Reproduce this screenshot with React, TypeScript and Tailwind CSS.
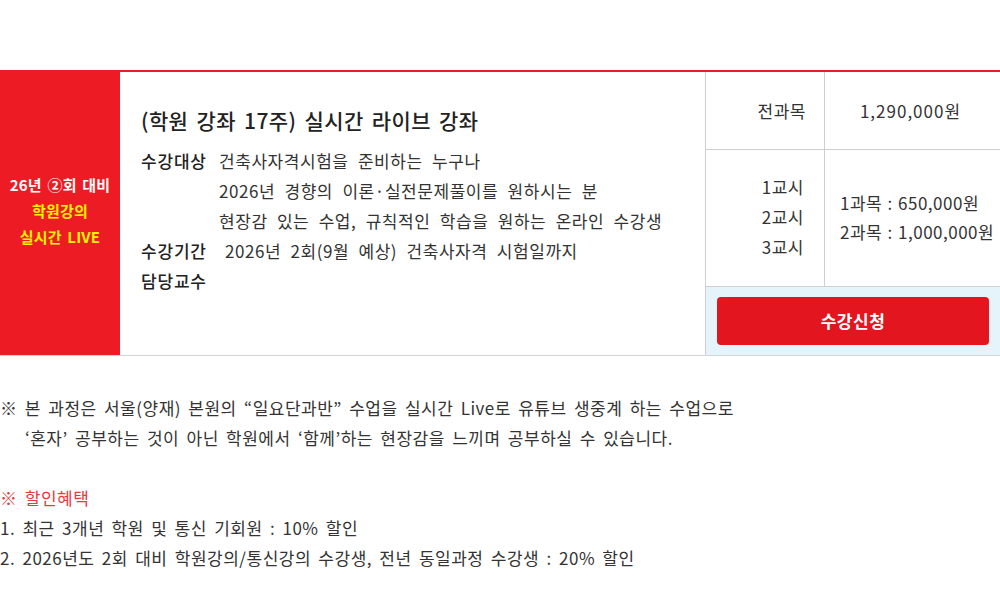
import React from "react";

const font = { fontFamily: '"Noto Sans CJK KR", "Noto Sans", sans-serif' };

export default function App() {
    return (
        <div className="w-[1000px] h-[611px] bg-white overflow-hidden text-[#333]" style={font}>
            <div className="h-[70px]" />

            {/* 강좌 박스 */}
            <div className="flex h-[286px] border-t-2 border-b border-t-[#e61e2a] border-b-[#d5d5d5]">
                {/* 왼쪽 빨간 라벨 */}
                <div className="w-[120px] shrink-0 bg-[#ed1c24] flex flex-col items-center justify-center pb-[6px] text-[15px] font-bold leading-[26px] tracking-[0.2px] [word-spacing:2px]">
                    <p className="text-white">26년 ②회 대비</p>
                    <p className="text-[#fff200]">학원강의</p>
                    <p className="text-[#fff200]">실시간 LIVE</p>
                </div>

                {/* 강좌 정보 */}
                <div className="w-[585px] shrink-0 pl-[21px] pt-[33px] text-[17px] leading-[30px] text-[#333]">
                    <h2 className="text-[21px] font-medium leading-[30px] text-[#222] tracking-[0.4px] [word-spacing:3px]">
                        (학원 강좌 17주) 실시간 라이브 강좌
                    </h2>
                    <div className="mt-[11px] tracking-[0.55px] [word-spacing:5px]">
                        <div className="flex">
                            <span className="w-[78px] shrink-0 font-medium text-[#222] tracking-[0.8px]">수강대상</span>
                            <div>
                                <p>건축사자격시험을 준비하는 누구나</p>
                                <p>2026년 경향의 이론·실전문제풀이를 원하시는 분</p>
                                <p>현장감 있는 수업, 규칙적인 학습을 원하는 온라인 수강생</p>
                            </div>
                        </div>
                        <div className="flex">
                            <span className="w-[84px] shrink-0 font-medium text-[#222] tracking-[0.8px]">수강기간</span>
                            <p>2026년 2회(9월 예상) 건축사자격 시험일까지</p>
                        </div>
                        <div className="flex">
                            <span className="w-[78px] shrink-0 font-medium text-[#222] tracking-[0.8px]">담당교수</span>
                        </div>
                    </div>
                </div>

                {/* 가격표 */}
                <div className="flex-1 flex flex-col border-l border-[#cfcfcf] text-[17px] text-[#333] tracking-[0.5px] [word-spacing:1px]">
                    <div className="flex h-[78px] border-b border-[#cfcfcf]">
                        <div className="w-[119px] shrink-0 border-r border-[#cfcfcf] flex items-center justify-end pr-[18px]">
                            전과목
                        </div>
                        <div className="flex-1 flex items-center justify-center pr-[4px] tracking-[1px]">1,290,000원</div>
                    </div>
                    <div className="flex h-[137px] border-b border-[#cfcfcf]">
                        <div className="w-[119px] shrink-0 border-r border-[#cfcfcf] flex flex-col items-end justify-center pr-[20px] leading-[30px] pb-[2px]">
                            <p>1교시</p>
                            <p>2교시</p>
                            <p>3교시</p>
                        </div>
                        <div className="flex-1 flex flex-col justify-center pl-[15px] leading-[29px] whitespace-nowrap pb-[2px]">
                            <p>1과목 : 650,000원</p>
                            <p>2과목 : 1,000,000원</p>
                        </div>
                    </div>
                    <div className="flex-1 bg-[#e5f3fb] px-[11px] py-[10px]">
                        <button className="w-full h-full rounded-[4px] bg-[#e3161f] text-white text-[17px] font-bold">
                            수강신청
                        </button>
                    </div>
                </div>
            </div>

            {/* 안내 문구 */}
            <div className="mt-[37px] text-[17px] leading-[30px] text-[#333] tracking-[0.5px] [word-spacing:3px]">
                <p>※ 본 과정은 서울(양재) 본원의 “일요단과반” 수업을 실시간 Live로 유튜브 생중계 하는 수업으로</p>
                <p className="pl-[25px]">‘혼자’ 공부하는 것이 아닌 학원에서 ‘함께’하는 현장감을 느끼며 공부하실 수 있습니다.</p>
                <p className="h-[30px]" />
                <p className="text-[#e8383d]">※ 할인혜택</p>
                <p>1. 최근 3개년 학원 및 통신 기회원 : 10% 할인</p>
                <p>2. 2026년도 2회 대비 학원강의/통신강의 수강생, 전년 동일과정 수강생 : 20% 할인</p>
            </div>
        </div>
    );
}
